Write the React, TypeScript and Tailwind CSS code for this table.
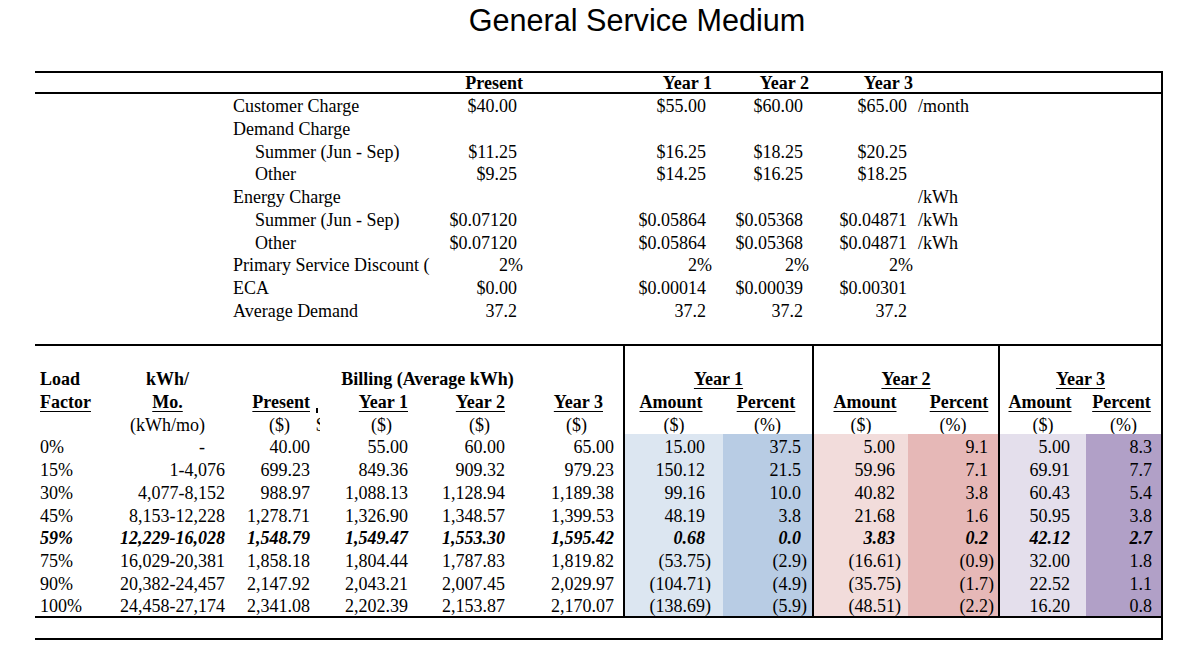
import React from 'react';

type UpperRow = { label: string; indent?: boolean; values: string[]; unit?: string };

const upperRows: UpperRow[] = [
    { label: 'Customer Charge', values: ['$40.00', '$55.00', '$60.00', '$65.00'], unit: '/month' },
    { label: 'Demand Charge', values: ['', '', '', ''] },
    { label: 'Summer (Jun - Sep)', indent: true, values: ['$11.25', '$16.25', '$18.25', '$20.25'] },
    { label: 'Other', indent: true, values: ['$9.25', '$14.25', '$16.25', '$18.25'] },
    { label: 'Energy Charge', values: ['', '', '', ''], unit: '/kWh' },
    { label: 'Summer (Jun - Sep)', indent: true, values: ['$0.07120', '$0.05864', '$0.05368', '$0.04871'], unit: '/kWh' },
    { label: 'Other', indent: true, values: ['$0.07120', '$0.05864', '$0.05368', '$0.04871'], unit: '/kWh' },
    { label: 'Primary Service Discount (', values: ['2%', '2%', '2%', '2%'] },
    { label: 'ECA', values: ['$0.00', '$0.00014', '$0.00039', '$0.00301'] },
    { label: 'Average Demand', values: ['37.2', '37.2', '37.2', '37.2'] },
];

type LowerRow = {
    lf: string;
    kwh: string;
    bills: string[];
    y1: [string, string];
    y2: [string, string];
    y3: [string, string];
    em?: boolean;
};

const lowerRows: LowerRow[] = [
    { lf: '0%', kwh: '-', bills: ['40.00', '55.00', '60.00', '65.00'], y1: ['15.00', '37.5'], y2: ['5.00', '9.1'], y3: ['5.00', '8.3'] },
    { lf: '15%', kwh: '1-4,076', bills: ['699.23', '849.36', '909.32', '979.23'], y1: ['150.12', '21.5'], y2: ['59.96', '7.1'], y3: ['69.91', '7.7'] },
    { lf: '30%', kwh: '4,077-8,152', bills: ['988.97', '1,088.13', '1,128.94', '1,189.38'], y1: ['99.16', '10.0'], y2: ['40.82', '3.8'], y3: ['60.43', '5.4'] },
    { lf: '45%', kwh: '8,153-12,228', bills: ['1,278.71', '1,326.90', '1,348.57', '1,399.53'], y1: ['48.19', '3.8'], y2: ['21.68', '1.6'], y3: ['50.95', '3.8'] },
    { lf: '59%', kwh: '12,229-16,028', bills: ['1,548.79', '1,549.47', '1,553.30', '1,595.42'], y1: ['0.68', '0.0'], y2: ['3.83', '0.2'], y3: ['42.12', '2.7'], em: true },
    { lf: '75%', kwh: '16,029-20,381', bills: ['1,858.18', '1,804.44', '1,787.83', '1,819.82'], y1: ['(53.75)', '(2.9)'], y2: ['(16.61)', '(0.9)'], y3: ['32.00', '1.8'] },
    { lf: '90%', kwh: '20,382-24,457', bills: ['2,147.92', '2,043.21', '2,007.45', '2,029.97'], y1: ['(104.71)', '(4.9)'], y2: ['(35.75)', '(1.7)'], y3: ['22.52', '1.1'] },
    { lf: '100%', kwh: '24,458-27,174', bills: ['2,341.08', '2,202.39', '2,153.87', '2,170.07'], y1: ['(138.69)', '(5.9)'], y2: ['(48.51)', '(2.2)'], y3: ['16.20', '0.8'] },
];

// accounting style: positives keep room for the closing paren
const Acct: React.FC<{ v: string }> = ({ v }) =>
    v.startsWith('(') ? <>{v}</> : <>{v}<span className="invisible">)</span></>;

const leftCols = 'grid grid-cols-[75px_115px_91px_4px_94px_97px_112px] h-[22.7px] leading-[22.7px] pt-[2px]';
const row = 'flex h-[22.7px] leading-[22.7px]';
const ul = 'underline decoration-1 underline-offset-[3px]';

type Group = {
    title: string;
    width: string;
    amtW: string;
    pctW: string;
    amtHead: string;
    pctHead: string;
    amtPad: string;
    pctPad: string;
    amtBg: string;
    pctBg: string;
    pick: (r: LowerRow) => [string, string];
};

const groups: Group[] = [
    { title: 'Year 1', width: 'w-[189px]', amtW: 'w-[98px]', pctW: 'w-[89px]', amtHead: 'pr-[6px]', pctHead: 'pr-[3px]', amtPad: 'pr-[12px]', pctPad: 'pr-[5px]', amtBg: 'bg-[#dce6f1]', pctBg: 'bg-[#b8cce4]', pick: r => r.y1 },
    { title: 'Year 2', width: 'w-[186px]', amtW: 'w-[94px]', pctW: 'w-[90px]', amtHead: 'pl-[8px]', pctHead: 'pl-[12px]', amtPad: 'pr-[7px]', pctPad: 'pr-[4px]', amtBg: 'bg-[#f2dcdb]', pctBg: 'bg-[#e6b8b7]', pick: r => r.y2 },
    { title: 'Year 3', width: 'w-[163px]', amtW: 'w-[86px]', pctW: 'w-[75px]', amtHead: 'pr-[6px]', pctHead: 'pr-[4px]', amtPad: 'pr-[10px]', pctPad: 'pr-[3px]', amtBg: 'bg-[#e4dfec]', pctBg: 'bg-[#b1a0c7]', pick: r => r.y3 },
];

const GroupBlock: React.FC<{ g: Group }> = ({ g }) => (
    <div className={`${g.width} border-l-2 border-black`}>
        <div className="h-[20.4px]" />
        <div className={`${row} pt-[2px] justify-center font-bold`}><span className={ul}>{g.title}</span></div>
        <div className={`${row} pt-[2px] font-bold`}>
            <div className={`${g.amtW} ${g.amtHead} text-center`}><span className={ul}>Amount</span></div>
            <div className={`${g.pctW} ${g.pctHead} text-center`}><span className={ul}>Percent</span></div>
        </div>
        <div className={`${row} pt-[2px]`}>
            <div className={`${g.amtW} text-center`}>($)</div>
            <div className={`${g.pctW} text-center`}>(%)</div>
        </div>
        {lowerRows.map((r, i) => {
            const [a, p] = g.pick(r);
            return (
                <div key={i} className={`${row} ${r.em ? 'font-bold italic' : ''}`}>
                    <div className={`${g.amtW} ${g.amtBg} ${g.amtPad} pt-[2px] text-right`}><Acct v={a} /></div>
                    <div className={`${g.pctW} ${g.pctBg} ${g.pctPad} pt-[2px] text-right`}><Acct v={p} /></div>
                </div>
            );
        })}
    </div>
);

const App: React.FC = () => {
    return (
        <div className="w-[1179px] h-[653px] bg-white text-black font-['Liberation_Serif','Times_New_Roman',serif] text-[18px]">
            <div className="h-[71px] pt-[3px] pl-[95px] flex justify-center">
                <h1 className="font-['Liberation_Sans',Arial,sans-serif] text-[30.6px] leading-[34px]">General Service Medium</h1>
            </div>

            <div className="ml-[35px] w-[1128px] border-t-2 border-r-2 border-b-2 border-black">
                {/* rate table */}
                <div className="grid grid-cols-[198px_200px_90px_189px_97px_104px_1fr] h-[21px] leading-[19px] pt-[1px] font-bold border-b-2 border-black">
                    <div />
                    <div />
                    <div className="text-right">Present</div>
                    <div className="text-right">Year 1</div>
                    <div className="text-right">Year 2</div>
                    <div className="text-right">Year 3</div>
                    <div />
                </div>
                {upperRows.map((r, i) => (
                    <div key={i} className="grid grid-cols-[198px_200px_90px_189px_97px_104px_1fr] h-[22.75px] leading-[22.75px] pt-[1px]">
                        <div />
                        <div className={`whitespace-nowrap ${r.indent ? 'pl-[22px]' : ''}`}>{r.label}</div>
                        {r.values.map((v, j) => (
                            <div key={j} className={`text-right ${v.endsWith('%') ? '' : 'pr-[6px]'}`}>{v}</div>
                        ))}
                        <div className="pl-[5px]">{r.unit}</div>
                    </div>
                ))}
                <div className="h-[22.5px]" />

                {/* bill comparison */}
                <div className="flex border-t-2 border-b-2 border-black">
                    <div className="w-[588px]">
                        <div className="h-[20.4px]" />
                        <div className={`${leftCols} font-bold`}>
                            <div className="pl-[5px]">Load</div>
                            <div className="text-center">kWh/</div>
                            <div className="col-span-5 text-center pl-[7px]">Billing (Average kWh)</div>
                        </div>
                        <div className={`${leftCols} font-bold`}>
                            <div className="pl-[5px]"><span className={ul}>Factor</span></div>
                            <div className="text-center"><span className={ul}>Mo.</span></div>
                            <div className="text-right pr-[6px]"><span className={ul}>Present</span></div>
                            <div className="flex items-end pb-[1px]"><div className="w-[2px] h-[5px] bg-black" /></div>
                            <div className="text-right pr-[6px]"><span className={ul}>Year 1</span></div>
                            <div className="text-right pr-[6px]"><span className={ul}>Year 2</span></div>
                            <div className="text-right pr-[20px]"><span className={ul}>Year 3</span></div>
                        </div>
                        <div className={leftCols}>
                            <div />
                            <div className="text-center">(kWh/mo)</div>
                            <div className="text-right pr-[26px]">($)</div>
                            <div className="overflow-hidden">$</div>
                            <div className="text-right pr-[22px]">($)</div>
                            <div className="text-right pr-[21px]">($)</div>
                            <div className="text-right pr-[36px]">($)</div>
                        </div>
                        {lowerRows.map((r, i) => (
                            <div key={i} className={`${leftCols} ${r.em ? 'font-bold italic' : ''}`}>
                                <div className="pl-[5px]">{r.lf}</div>
                                <div className={`text-right whitespace-nowrap ${r.kwh === '-' ? 'pr-[20px]' : ''}`}>{r.kwh}</div>
                                <div className="text-right pr-[6px]">{r.bills[0]}</div>
                                <div />
                                <div className="text-right pr-[6px]">{r.bills[1]}</div>
                                <div className="text-right pr-[6px]">{r.bills[2]}</div>
                                <div className="text-right pr-[9px]">{r.bills[3]}</div>
                            </div>
                        ))}
                    </div>
                    {groups.map(g => (
                        <GroupBlock key={g.title} g={g} />
                    ))}
                </div>
                <div className="h-[20px]" />
            </div>
        </div>
    );
};

export default App;
